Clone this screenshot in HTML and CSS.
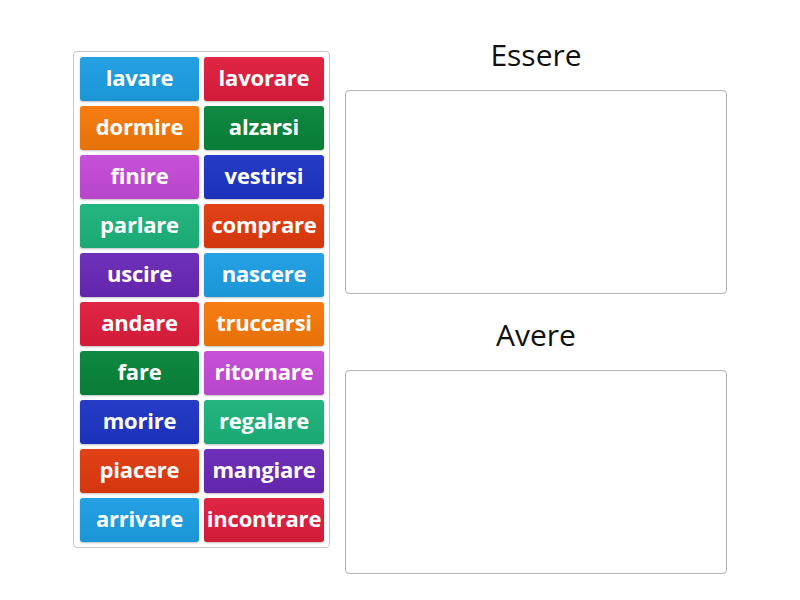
FILE: index.html
```html
<!DOCTYPE html>
<html>
<head>
    <link rel="stylesheet" href="styles.css">
</head>
<body>
    <div class="activity">
        <div class="tiles">
            <div class="tile blue">lavare</div>
            <div class="tile red">lavorare</div>
            <div class="tile orange">dormire</div>
            <div class="tile green">alzarsi</div>
            <div class="tile magenta">finire</div>
            <div class="tile navy">vestirsi</div>
            <div class="tile teal">parlare</div>
            <div class="tile rust">comprare</div>
            <div class="tile purple">uscire</div>
            <div class="tile blue">nascere</div>
            <div class="tile red">andare</div>
            <div class="tile orange">truccarsi</div>
            <div class="tile green">fare</div>
            <div class="tile magenta">ritornare</div>
            <div class="tile navy">morire</div>
            <div class="tile teal">regalare</div>
            <div class="tile rust">piacere</div>
            <div class="tile purple">mangiare</div>
            <div class="tile blue">arrivare</div>
            <div class="tile red">incontrare</div>
        </div>
        <div class="groups">
            <div class="group">
                <div class="group-title">Essere</div>
                <div class="drop-box"></div>
            </div>
            <div class="group">
                <div class="group-title">Avere</div>
                <div class="drop-box"></div>
            </div>
        </div>
    </div>
</body>
</html>
```
FILE: styles.css
```css
body {
    margin: 0;
    font-family: "Open Sans", Arial, sans-serif;
    background: #fff;
}
.activity {
    display: flex;
    align-items: flex-start;
    padding: 38px 0 0 73px;
    gap: 15px;
}
.tiles {
    margin-top: 13px;
    display: grid;
    grid-template-columns: 119px 120px;
    grid-auto-rows: 44px;
    gap: 5px;
    padding: 5px 5px 5px 6px;
    border: 1px solid #c8c8c8;
    border-radius: 4px;
}
.tile {
    display: flex;
    align-items: center;
    justify-content: center;
    padding-bottom: 5px;
    border-radius: 3px;
    color: #fff;
    font-weight: bold;
    font-size: 22px;
    letter-spacing: -0.2px;
    white-space: nowrap;
    box-shadow: 0 1px 2px rgba(0, 0, 0, 0.25);
    background-image: linear-gradient(rgba(255, 255, 255, 0.04), rgba(0, 0, 0, 0.06));
}
.blue { background-color: #1c9ee3; }
.red { background-color: #de1d3d; }
.orange { background-color: #f5780a; }
.green { background-color: #07843a; }
.magenta { background-color: #c34ad6; }
.navy { background-color: #1e34c4; }
.teal { background-color: #1cb27a; }
.rust { background-color: #e03a0e; }
.purple { background-color: #6828b6; }
.groups {
    width: 382px;
}
.group-title {
    text-align: center;
    font-size: 30px;
    line-height: 34px;
    color: #111;
    margin-bottom: 18px;
}
.drop-box {
    height: 202px;
    border: 1px solid #b4b4b4;
    border-radius: 4px;
    margin-bottom: 24px;
}
```
